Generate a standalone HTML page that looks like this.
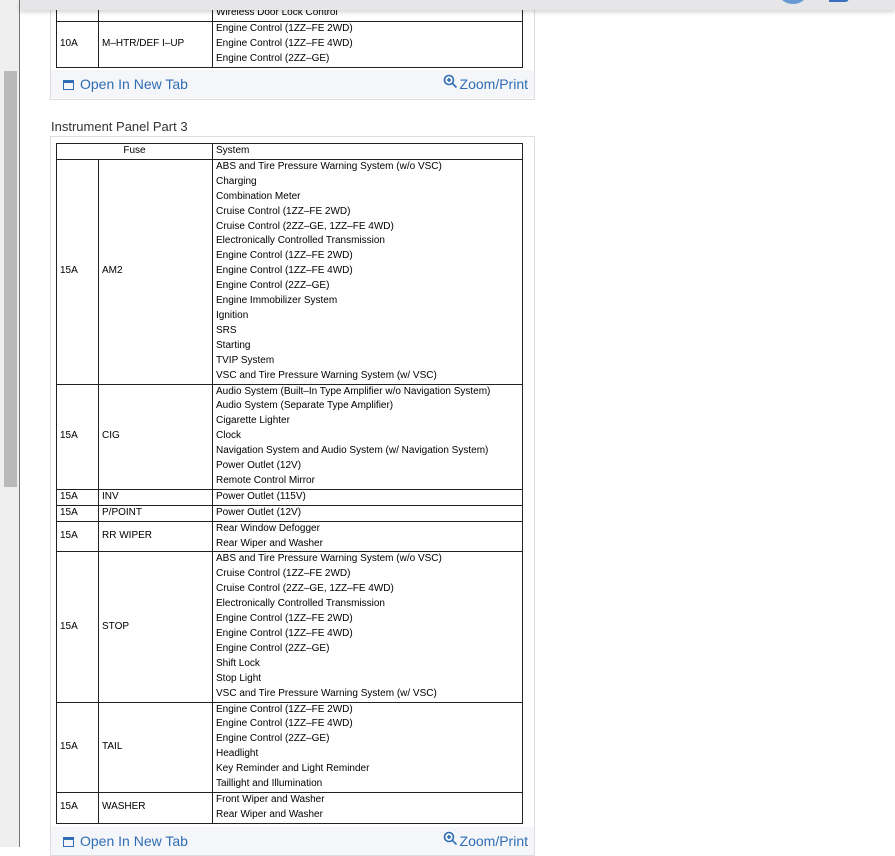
<!DOCTYPE html>
<html><head><meta charset="utf-8"><style>
*{margin:0;padding:0;box-sizing:border-box}
body{width:895px;height:847px;overflow:hidden;background:#fff;font-family:"Liberation Sans",Arial,sans-serif;position:relative}
.lstrip{position:absolute;left:0;top:0;width:19px;height:847px;background:#efefef}
.thumb{position:absolute;left:4px;top:71px;width:13px;height:416px;background:#b9b9b9}
.vline{position:absolute;left:19px;top:0;width:1px;height:847px;background:#777}
.hdr{position:absolute;left:20px;top:0;width:875px;height:10px;background:#e6e6e8;box-shadow:0 2px 5px rgba(0,0,0,.18);z-index:5}
.card{position:absolute;left:50px;width:485px;border:1px solid #ddd;background:#fff}
table{border-collapse:collapse;font-size:10px;color:#000;table-layout:fixed}
td{border:1px solid #222;padding:0 3px;vertical-align:middle;line-height:14.9px;white-space:nowrap}
.links{position:absolute;left:0;width:483px;height:28px;background:#f4f6f9;color:#2f6db5;font-size:14px}
.ont{position:absolute;left:12px;top:6px}
.zp{position:absolute;right:6px;top:4px}
.title{position:absolute;left:51px;top:119px;font-size:13px;color:#333}
</style></head><body>
<div class="lstrip"><div class="thumb"></div></div>
<div class="vline"></div>
<div class="hdr"><div style="position:absolute;left:760px;top:-14px;width:26px;height:18px;border-radius:50%;background:#6a9ad4"></div><div style="position:absolute;left:809px;top:-4px;width:20px;height:6px;border-bottom:2px solid #3a6fc0;border-right:2px solid #3a6fc0;border-radius:0 0 4px 0"></div></div>

<div class="card" style="top:-4px;height:104px">
<table style="position:absolute;left:5px;top:0;width:466px">
<col style="width:42px"><col style="width:114px"><col style="width:310px">
<tr><td style="height:24px"></td><td></td><td style="vertical-align:bottom">Wireless Door Lock Control</td></tr>
<tr><td>10A</td><td>M–HTR/DEF I–UP</td><td>Engine Control (1ZZ–FE 2WD)<br>Engine Control (1ZZ–FE 4WD)<br>Engine Control (2ZZ–GE)</td></tr>
</table>
<div class="links" style="top:73px"><span class="ont"><span style="display:inline-block;width:11px;height:10px;border:1.5px solid #2f6db5;border-top-width:3px;vertical-align:-1px;margin-right:6px"></span>Open In New Tab</span><span class="zp"><svg width="15" height="15" viewBox="0 0 15 15" style="vertical-align:0;margin-right:2px"><circle cx="6" cy="6" r="4.5" fill="none" stroke="#2f6db5" stroke-width="1.6"/><path d="M9.3 9.3L13.5 13.5M4 6H8M6 4V8" stroke="#2f6db5" stroke-width="1.6"/></svg>Zoom/Print</span></div>
</div>

<div class="title">Instrument Panel Part 3</div>

<div class="card" style="top:136px;height:720px">
<table style="position:absolute;left:5px;top:6px;width:466px">
<col style="width:42px"><col style="width:114px"><col style="width:310px">
<tr><td colspan="2" style="text-align:center">Fuse</td><td>System</td></tr>
<tr><td>15A</td><td>AM2</td><td>ABS and Tire Pressure Warning System (w/o VSC)<br>Charging<br>Combination Meter<br>Cruise Control (1ZZ–FE 2WD)<br>Cruise Control (2ZZ–GE, 1ZZ–FE 4WD)<br>Electronically Controlled Transmission<br>Engine Control (1ZZ–FE 2WD)<br>Engine Control (1ZZ–FE 4WD)<br>Engine Control (2ZZ–GE)<br>Engine Immobilizer System<br>Ignition<br>SRS<br>Starting<br>TVIP System<br>VSC and Tire Pressure Warning System (w/ VSC)</td></tr>
<tr><td>15A</td><td>CIG</td><td>Audio System (Built–In Type Amplifier w/o Navigation System)<br>Audio System (Separate Type Amplifier)<br>Cigarette Lighter<br>Clock<br>Navigation System and Audio System (w/ Navigation System)<br>Power Outlet (12V)<br>Remote Control Mirror</td></tr>
<tr><td>15A</td><td>INV</td><td>Power Outlet (115V)</td></tr>
<tr><td>15A</td><td>P/POINT</td><td>Power Outlet (12V)</td></tr>
<tr><td>15A</td><td>RR WIPER</td><td>Rear Window Defogger<br>Rear Wiper and Washer</td></tr>
<tr><td>15A</td><td>STOP</td><td>ABS and Tire Pressure Warning System (w/o VSC)<br>Cruise Control (1ZZ–FE 2WD)<br>Cruise Control (2ZZ–GE, 1ZZ–FE 4WD)<br>Electronically Controlled Transmission<br>Engine Control (1ZZ–FE 2WD)<br>Engine Control (1ZZ–FE 4WD)<br>Engine Control (2ZZ–GE)<br>Shift Lock<br>Stop Light<br>VSC and Tire Pressure Warning System (w/ VSC)</td></tr>
<tr><td>15A</td><td>TAIL</td><td>Engine Control (1ZZ–FE 2WD)<br>Engine Control (1ZZ–FE 4WD)<br>Engine Control (2ZZ–GE)<br>Headlight<br>Key Reminder and Light Reminder<br>Taillight and Illumination</td></tr>
<tr><td>15A</td><td>WASHER</td><td>Front Wiper and Washer<br>Rear Wiper and Washer</td></tr>
</table>
<div class="links" style="top:690px"><span class="ont"><span style="display:inline-block;width:11px;height:10px;border:1.5px solid #2f6db5;border-top-width:3px;vertical-align:-1px;margin-right:6px"></span>Open In New Tab</span><span class="zp"><svg width="15" height="15" viewBox="0 0 15 15" style="margin-right:2px"><circle cx="6" cy="6" r="4.5" fill="none" stroke="#2f6db5" stroke-width="1.6"/><path d="M9.3 9.3L13.5 13.5M4 6H8M6 4V8" stroke="#2f6db5" stroke-width="1.6"/></svg>Zoom/Print</span></div>
</div>
</body></html>
